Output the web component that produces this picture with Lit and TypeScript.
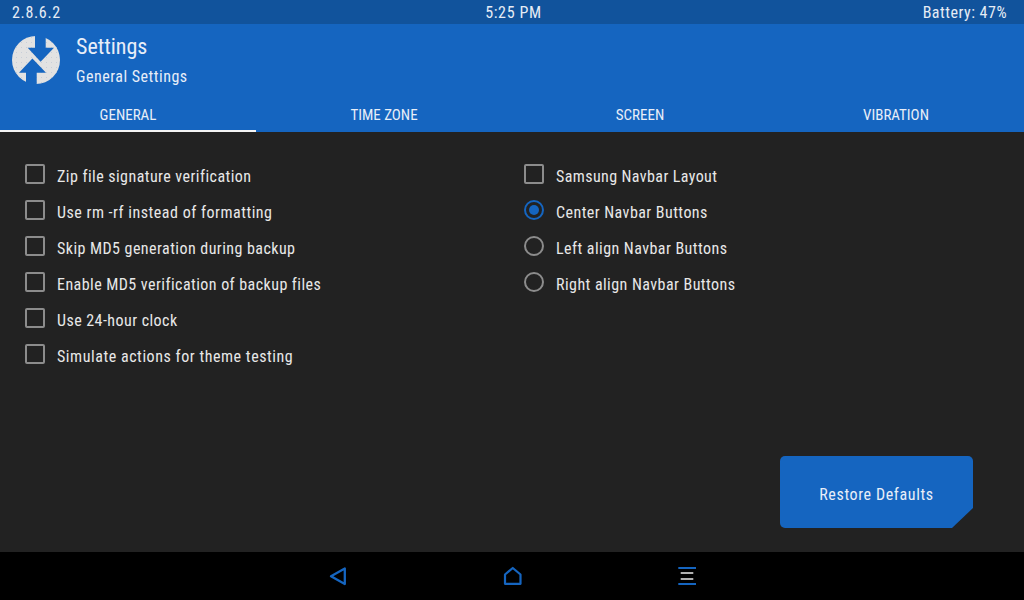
import { LitElement, html, css, svg } from "lit";
import { customElement } from "lit/decorators.js";
import { classMap } from "lit/directives/class-map.js";

const LEFT = [
  { t: "Zip file signature verification" },
  { t: "Use rm -rf instead of formatting", w: 1 },
  { t: "Skip MD5 generation during backup" },
  { t: "Enable MD5 verification of backup files" },
  { t: "Use 24-hour clock" },
  { t: "Simulate actions for theme testing", w: 2 },
];

@customElement("app-root")
export class AppRoot extends LitElement {
  static styles = css`
    :host {
      display: flex;
      flex-direction: column;
      width: 1024px;
      height: 600px;
      overflow: hidden;
      background: #222222;
      color: #e8e8e8;
      font-family: Roboto, "Liberation Sans", sans-serif;
      font-size: 16px;
      font-stretch: 75%;
    }
    .status {
      height: 24px;
      box-sizing: border-box;
      background: #11539c;
      display: grid;
      grid-template-columns: 1fr auto 1fr;
      align-items: center;
      padding: 0 17px 0 12px;
      color: #e6ecf5;
      letter-spacing: 0.65px;
    }
    .status .mid { padding-left: 8px; }
    .status .right { text-align: right; letter-spacing: 0.5px; }
    .head {
      height: 76px;
      box-sizing: border-box;
      background: #1565c0;
      display: flex;
      align-items: flex-start;
      padding: 12px 0 0 12px;
      gap: 16px;
      color: #e8eef8;
    }
    .logo { width: 48px; height: 48px; flex: none; display: block; }
    .titles { display: flex; flex-direction: column; }
    .title { font-size: 22px; line-height: 22px; }
    .sub { line-height: 20px; margin-top: 9px; letter-spacing: 0.5px; }
    .tabs {
      height: 32px;
      background: #1565c0;
      display: grid;
      grid-template-columns: repeat(4, 256px);
      color: #e8eef8;
      font-size: 15px;
    }
    .tab {
      display: flex;
      align-items: center;
      justify-content: center;
      box-sizing: border-box;
      border-bottom: 2px solid transparent;
    }
    .tab.on { border-bottom-color: #f4f4f4; }
    .main {
      flex: 1;
      display: flex;
      flex-direction: column;
      padding: 26px 51px 24px 25px;
      min-height: 0;
    }
    .cols {
      flex: 1;
      display: grid;
      grid-template-columns: 499px 1fr;
      align-content: start;
    }
    .col { display: flex; flex-direction: column; }
    .row {
      height: 36px;
      display: flex;
      align-items: center;
      gap: 12px;
      letter-spacing: 0.45px;
    }
    .row.w1 { letter-spacing: 0.51px; }
    .row.w2 { letter-spacing: 0.55px; }
    .row.n1 { letter-spacing: 0.4px; }
    .box {
      width: 20px;
      height: 20px;
      box-sizing: border-box;
      border: 2px solid #8c8c8c;
      border-radius: 2px;
      flex: none;
      margin-top: -4px;
    }
    .radio {
      width: 20px;
      height: 20px;
      box-sizing: border-box;
      border: 2px solid #8c8c8c;
      border-radius: 50%;
      flex: none;
      margin-top: -4px;
      display: flex;
      align-items: center;
      justify-content: center;
    }
    .radio.on { border-color: #1565c0; }
    .radio.on::after {
      content: "";
      width: 10px;
      height: 10px;
      border-radius: 50%;
      background: #1565c0;
    }
    .actions { display: flex; justify-content: flex-end; }
    .btn {
      width: 193px;
      height: 72px;
      box-sizing: border-box;
      padding-top: 4px;
      background: #1565c0;
      border-radius: 5px;
      clip-path: polygon(0 0, 100% 0, 100% 52px, 172px 100%, 0 100%);
      display: flex;
      align-items: center;
      justify-content: center;
      color: #e8eef8;
      letter-spacing: 0.62px;
    }
    .nav {
      height: 48px;
      background: #000;
      display: flex;
      justify-content: center;
      align-items: center;
      gap: 151px;
    }
    .nav svg { width: 24px; height: 24px; display: block; }
  `;

  private logo() {
    return html`<svg class="logo" viewBox="12 36 48 48">
      <defs>
        <pattern id="dots" width="5" height="5" patternUnits="userSpaceOnUse">
          <rect x="1" y="2" width="1" height="1" fill="#c8ced8"></rect>
        </pattern>
      </defs>
      <circle cx="36" cy="60" r="24" fill="#e2e2e2"></circle>
      <circle cx="36" cy="60" r="24" fill="url(#dots)"></circle>
      <polygon points="35,30 45.7,30 45.7,47.7 54,47.7 40.6,61.7 27.7,47.7 35,47.7" fill="#1565c0"></polygon>
      <polygon points="26,90 36.7,90 36.7,72.7 46,72.7 32.4,58.5 19,72.7 26,72.7" fill="#1565c0"></polygon>
    </svg>`;
  }

  render() {
    return html`
      <div class="status">
        <span>2.8.6.2</span><span class="mid">5:25 PM</span><span class="right">Battery: 47%</span>
      </div>
      <div class="head">
        ${this.logo()}
        <div class="titles">
          <span class="title">Settings</span>
          <span class="sub">General Settings</span>
        </div>
      </div>
      <div class="tabs">
        <div class="tab on">GENERAL</div>
        <div class="tab">TIME ZONE</div>
        <div class="tab">SCREEN</div>
        <div class="tab">VIBRATION</div>
      </div>
      <div class="main">
        <div class="cols">
          <div class="col">
            ${LEFT.map(
              (r) => html`<div class=${classMap({ row: true, w1: r.w === 1, w2: r.w === 2 })}>
                <span class="box"></span><span>${r.t}</span>
              </div>`
            )}
          </div>
          <div class="col">
            <div class="row n1"><span class="box"></span><span>Samsung Navbar Layout</span></div>
            <div class="row"><span class="radio on"></span><span>Center Navbar Buttons</span></div>
            <div class="row"><span class="radio"></span><span>Left align Navbar Buttons</span></div>
            <div class="row"><span class="radio"></span><span>Right align Navbar Buttons</span></div>
          </div>
        </div>
        <div class="actions"><div class="btn">Restore Defaults</div></div>
      </div>
      <div class="nav">
        <svg viewBox="0 0 24 24" fill="none" stroke="#1565c0" stroke-width="2.3" stroke-linejoin="round">
          <path d="M6 12.2 L19.8 4.5 V20 Z"></path>
        </svg>
        <svg viewBox="0 0 24 24" fill="none" stroke="#1565c0" stroke-width="2.2" stroke-linejoin="round">
          <path d="M5 10.5 L12.75 4 L20.5 10.5 V19.8 H5 Z"></path>
        </svg>
        <svg viewBox="0 0 24 24" fill="none">
          ${svg`<path d="M3.3 4 H21 M3.3 20 H21" stroke="#1565c0" stroke-width="2"></path>
          <path d="M5.7 9 H18.3 M5.7 15 H18.3" stroke="#b0b0b0" stroke-width="2"></path>`}
        </svg>
      </div>
    `;
  }
}
